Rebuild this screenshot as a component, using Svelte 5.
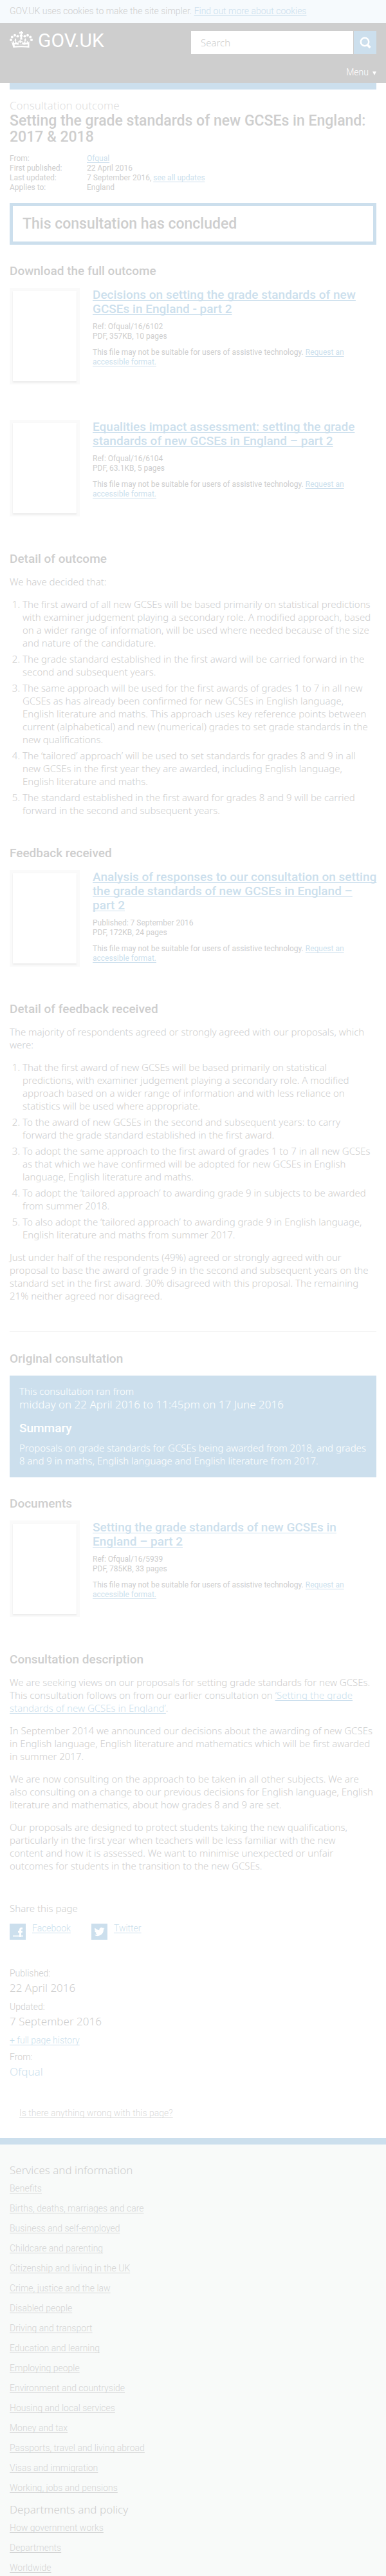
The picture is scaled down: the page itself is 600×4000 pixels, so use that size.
<script>
  const outcomeDocs = [
    { title: 'Decisions on setting the grade standards of new GCSEs in England - part 2', ref: 'Ref: Ofqual/16/6102', info: 'PDF, 357KB, 10 pages' },
    { title: 'Equalities impact assessment: setting the grade standards of new GCSEs in England – part 2', ref: 'Ref: Ofqual/16/6104', info: 'PDF, 63.1KB, 5 pages' }
  ];
  const feedbackDocs = [
    { title: 'Analysis of responses to our consultation on setting the grade standards of new GCSEs in England – part\u00a02', ref: 'Published: 7 September 2016', info: 'PDF, 172KB, 24 pages' }
  ];
  const originalDocs = [
    { title: 'Setting the grade standards of new GCSEs in England\u00a0– part 2', ref: 'Ref: Ofqual/16/5939', info: 'PDF, 785KB, 33 pages' }
  ];
  const services = [
    'Benefits', 'Births, deaths, marriages and care', 'Business and self-employed', 'Childcare and parenting',
    'Citizenship and living in the UK', 'Crime, justice and the law', 'Disabled people', 'Driving and transport',
    'Education and learning', 'Employing people', 'Environment and countryside', 'Housing and local services',
    'Money and tax', 'Passports, travel and living abroad', 'Visas and immigration', 'Working, jobs and pensions'
  ];
  const departments = ['How government works', 'Departments', 'Worldwide'];
</script>

{#snippet attachments(docs)}
  <div class="attachments">
    {#each docs as doc}
      <article class="attachment">
        <div class="thumb"><div class="sheet"></div></div>
        <div class="details">
          <h3><a href="#top">{doc.title}</a></h3>
          <p class="meta">{doc.ref}<br />{doc.info}</p>
          <p class="meta">This file may not be suitable for users of assistive technology. <a href="#top">Request an accessible format.</a></p>
        </div>
      </article>
    {/each}
  </div>
{/snippet}

<div class="cookies">
  <p>GOV.UK uses cookies to make the site simpler. <a href="#top">Find out more about cookies</a></p>
</div>

<header class="header" id="top">
  <div class="header-row">
    <a class="logo" href="#top">
      <svg width="36" height="26" viewBox="0 0 36 26" fill="#fff" aria-hidden="true">
        <path d="M17 0h2l-.3 2 2.300-.4v2.800l-2.300-.4.400 1.600c1 .3 1.400 1.100 1.100 2l-1 2.400.8 3.500h-4l.8-3.500-1-2.400c-.3-.9.100-1.700 1.100-2l.400-1.600-2.300.4v-2.800l2.300.4z" />
        <circle cx="2" cy="14" r="2" /><circle cx="3.800" cy="9.500" r="2" /><circle cx="8" cy="6.800" r="2" /><circle cx="12.500" cy="8.200" r="2" />
        <circle cx="34" cy="14" r="2" /><circle cx="32.200" cy="9.500" r="2" /><circle cx="28" cy="6.800" r="2" /><circle cx="23.500" cy="8.200" r="2" />
        <path d="M5.500 26 2.700 16.200 5 18.400l-.3-2.800 2 1.200.2 2.400 2-1.200-.3-2.400-1.200-.8 1.500-3.800 1.600 3.200-.8 1.200.8 2.400 2.600.6-.3-1.900 2.300.8-1.300 2.500c-.5 1.300.8 2 1.700 1.200l1.300-1.600-1.300-1.600-1.800.8v-2.800l1.900.8-.6-2h3.200l-.6 2 1.900-.8v2.800l-1.800-.8-1.300 1.600 1.300 1.600c.9.800 2.200.1 1.700-1.200l-1.300-2.500 2.300-.8-.3 1.900 2.600-.6.800-2.400-.8-1.200 1.600-3.200 1.500 3.800-1.200.8-.3 2.400 2 1.200.2-2.400 2-1.200-.3 2.800 2.300-2.200L30.500 26c-8-.9-17-.9-25 0zM7.500 21.200l.5 2.200c6.500-.7 13.500-.7 20 0l.5-2.200c-2.500-.8-5 .4-6.500.2-1.500 0-2.600-.6-4-.6s-2.500.6-4 .6c-1.500.2-4-1-6.500-.2z" fill-rule="evenodd" />
      </svg>
      <span>GOV.UK</span>
    </a>
    <form class="search" onsubmit={(e) => e.preventDefault()}>
      <input type="search" placeholder="Search" aria-label="Search" />
      <button type="submit" aria-label="Submit search">
        <svg width="20" height="20" viewBox="0 0 20 20" fill="none" stroke="#fff" stroke-width="2.500" aria-hidden="true">
          <circle cx="9" cy="9" r="6.200" /><path d="M12.800 13.200 17.500 18" stroke-width="3.500" />
        </svg>
      </button>
    </form>
  </div>
  <button class="menu" type="button">Menu
    <svg width="6" height="6" viewBox="0 0 6 6" fill="#fff" aria-hidden="true"><path d="M0 0h6L3 6z" /></svg>
  </button>
</header>

<main>
  <div class="bar"></div>
  <p class="eyebrow">Consultation outcome</p>
  <h1>Setting the grade standards of new GCSEs in England: 2017 &amp; 2018</h1>

  <dl class="facts">
    <dt>From:</dt><dd><a href="#top">Ofqual</a></dd>
    <dt>First published:</dt><dd>22 April 2016</dd>
    <dt>Last updated:</dt><dd>7 September 2016, <a href="#history">see all updates</a></dd>
    <dt>Applies to:</dt><dd>England</dd>
  </dl>

  <div class="notice">This consultation has concluded</div>

  <section class="near">
    <h2>Download the full outcome</h2>
    {@render attachments(outcomeDocs)}
  </section>

  <section class="after-docs">
    <h2>Detail of outcome</h2>
    <div class="prose">
      <p>We have decided that:</p>
      <ol>
        <li>The first award of all new GCSEs will be based primarily on statistical predictions with examiner judgement playing a secondary role. A modified approach, based on a wider range of information, will be used where needed because of the size and nature of the candidature.</li>
        <li>The grade standard established in the first award will be carried forward in the second and subsequent years.</li>
        <li>The same approach will be used for the first awards of grades 1 to 7 in all new GCSEs as has already been confirmed for new GCSEs in English language, English literature and maths. This approach uses key reference points between current (alphabetical) and new (numerical) grades to set grade standards in the new qualifications.</li>
        <li>The ‘tailored’ approach’ will be used to set standards for grades 8 and 9 in all new&nbsp;GCSEs in the first year they are awarded, including English language, English&nbsp;literature and maths.</li>
        <li>The standard established in the first award for grades 8 and 9 will be carried forward in the second and subsequent years.</li>
      </ol>
    </div>
  </section>

  <section class="after-prose">
    <h2>Feedback received</h2>
    {@render attachments(feedbackDocs)}
  </section>

  <section class="after-docs">
    <h2>Detail of feedback received</h2>
    <div class="prose">
      <p>The majority of respondents agreed or strongly agreed with our proposals, which were:</p>
      <ol>
        <li>That the first award of new GCSEs will be based primarily on statistical predictions, with examiner judgement playing a secondary role. A modified approach based on a wider range of information and with less reliance on statistics will be used where appropriate.</li>
        <li>To the award of new GCSEs in the second and subsequent years: to carry forward the grade standard established in the first award.</li>
        <li>To adopt the same approach to the first award of grades 1 to 7 in all new GCSEs as that which we have confirmed will be adopted for new GCSEs in English language, English literature and maths.</li>
        <li>To adopt the ‘tailored approach’ to awarding grade 9 in subjects to be awarded from summer 2018.</li>
        <li>To also adopt the ‘tailored approach’ to awarding grade 9 in English language, English literature and maths from summer 2017.</li>
      </ol>
      <p>Just under half of the respondents (49%) agreed or strongly agreed with our proposal to base the award of grade 9 in the second and subsequent years on the standard set in the first award. 30% disagreed with this proposal. The remaining 21% neither agreed nor disagreed.</p>
    </div>
  </section>

  <section class="original">
    <h2>Original consultation</h2>
    <div class="summary">
      <p>This consultation ran from</p>
      <p class="dates">midday on 22 April 2016 to 11:45pm on 17 June 2016</p>
      <h3>Summary</h3>
      <p>Proposals on grade standards for GCSEs being awarded from 2018, and grades 8 and 9 in maths, English language and English literature from 2017.</p>
    </div>
  </section>

  <section class="near">
    <h2>Documents</h2>
    {@render attachments(originalDocs)}
  </section>

  <section class="after-docs">
    <h2>Consultation description</h2>
    <div class="prose">
      <p>We are seeking views on our proposals for setting grade standards for new GCSEs. This consultation follows on from our earlier consultation on <a href="#top">‘Setting the grade standards of new GCSEs in England’</a>.</p>
      <p>In September 2014 we announced our decisions about the awarding of new GCSEs in English language, English literature and mathematics which will be first awarded in summer 2017.</p>
      <p>We are now consulting on the approach to be taken in all other subjects. We are also consulting on a change to our previous decisions for English language, English literature and mathematics, about how grades 8 and 9 are set.</p>
      <p>Our proposals are designed to protect students taking the new qualifications, particularly in the first year when teachers will be less familiar with the new content&nbsp;and how it is assessed. We want to minimise unexpected or unfair outcomes&nbsp;for students in the transition to the new GCSEs.</p>
    </div>
  </section>

  <section class="share">
    <p>Share this page</p>
    <ul>
      <li>
        <svg width="25" height="25" viewBox="0 0 25 25" aria-hidden="true">
          <path fill="#ccdfed" d="M0 0h25v25H0z" /><path fill="#e8f1f7" d="M5 18h16v3H5z" />
          <path fill="#fff" d="M15 21v-7h-2v-3h2V9.500C15 7 16.500 6 18.500 6H20v3h-1.200c-.7 0-.8.400-.8 1v1h2l-.3 3H18v7z" />
        </svg>
        <a href="#top">Facebook</a>
      </li>
      <li>
        <svg width="25" height="25" viewBox="0 0 25 25" aria-hidden="true">
          <path fill="#ccdfed" d="M0 0h25v25H0z" />
          <path transform="translate(4.500 4.500) scale(.67)" fill="#fff" d="M24 4.600a10 10 0 0 1-2.800.8 5 5 0 0 0 2.100-2.700 10 10 0 0 1-3.100 1.200 4.900 4.900 0 0 0-8.400 4.500A14 14 0 0 1 1.700 3.100a4.900 4.900 0 0 0 1.500 6.600 5 5 0 0 1-2.200-.6 4.900 4.900 0 0 0 3.900 4.900 5 5 0 0 1-2.200.1 4.900 4.900 0 0 0 4.600 3.400A9.900 9.900 0 0 1 0 19.500 14 14 0 0 0 21.500 7.100 10 10 0 0 0 24 4.600z" />
        </svg>
        <a href="#top">Twitter</a>
      </li>
    </ul>
  </section>

  <dl class="history" id="history">
    <div><dt>Published:</dt><dd>22 April 2016</dd></div>
    <div><dt>Updated:</dt><dd>7 September 2016</dd></div>
    <div><dd class="more"><a href="#history">+ full page history</a></dd></div>
    <div><dt>From:</dt><dd><a class="plain" href="#top">Ofqual</a></dd></div>
  </dl>

  <p class="report"><a href="#top">Is there anything wrong with this page?</a></p>
</main>

<footer>
  <h2>Services and information</h2>
  <ul>
    {#each services as item}<li><a href="#top">{item}</a></li>{/each}
  </ul>
  <h2>Departments and policy</h2>
  <ul>
    {#each departments as item}<li><a href="#top">{item}</a></li>{/each}
  </ul>
</footer>

<style>
  :global(body) { background: #fff; }
  .cookies, .header, main, footer {
    --ui: Roboto, "Liberation Sans", sans-serif;
    --text: "Noto Sans", "Liberation Sans", sans-serif;
    box-sizing: border-box;
    font: 340 15px/20px var(--text);
    color: #cecece;
  }
  p, h1, h2, h3, dl, dd, ol, ul { margin: 0; padding: 0; }
  a { color: #ccdfed; text-underline-offset: 2px; text-decoration-thickness: 1px; text-decoration-skip-ink: none; }
  ul { list-style: none; }

  .cookies { padding: 7px 15px 9px; background: #f6fafd; font: 300 14px/20px var(--ui); }

  .header { padding: 12px 15px 7px; background: #cecece; }
  .header-row { display: flex; justify-content: space-between; align-items: flex-start; gap: 15px; }
  .logo { display: flex; gap: 8px; color: #fff; text-decoration: none; font: 400 30px/26px var(--ui); }
  .logo span { padding-top: 2px; }
  .search { display: flex; flex: 0 1 264px; gap: 1px; }
  .search input {
    box-sizing: border-box; flex: 1; min-width: 0; height: 36px; padding: 0 15px; border: 0; border-radius: 0;
    appearance: none; background: #fff; color: #cecece; font: 300 15px/20px var(--text);
  }
  .search input::placeholder { color: #cecece; opacity: 1; }
  .search button {
    display: flex; align-items: center; justify-content: center; width: 35px; padding: 0; border: 0; background: #ccdfed;
  }
  .menu {
    display: flex; align-items: baseline; gap: 6px; margin: 18px 0 0 auto; padding: 0; border: 0; background: none;
    color: #fff; font: 300 14px/20px var(--ui);
  }

  main { padding: 0 15px 29px; }
  .bar { height: 10px; margin-bottom: 14px; background: #ccdfed; }
  .eyebrow { color: #dedede; font-weight: 300; font-size: 17px; line-height: 22px; }
  h1 { font: 500 23px/25px var(--ui); }
  .facts {
    display: grid; grid-template-columns: 120px 1fr; margin-top: 14px; font: 400 12px/15px var(--ui);
  }
  .notice { margin-top: 16px; padding: 15px; border: 5px solid #ccdfed; font: 500 23px/25px var(--ui); }

  h2 { font: 500 19px/25px var(--ui); }
  .near { margin-top: 28px; }
  .after-docs { margin-top: 53px; }
  .after-prose { margin-top: 44px; }
  .original { margin-top: 45px; padding-top: 29px; border-top: 1px solid #f5f5f5; }

  .attachments { display: grid; gap: 55px; margin-top: 14px; }
  .attachment { display: grid; grid-template-columns: 109px 1fr; gap: 20px; min-height: 150px; }
  .thumb { box-sizing: border-box; height: 150px; padding: 5px; background: #fafafa; }
  .sheet { height: 100%; background: #fff; box-shadow: 0 2px 2px #ebebeb, 0 0 1px #ebebeb; }
  .attachment h3 { margin-right: -8px; font: 500 19px/22px var(--ui); }
  .meta { margin-top: 10px; font: 400 12px/15px var(--ui); }
  h3 + .meta { margin-top: 9px; }

  .prose { display: grid; gap: 15px; margin-top: 13px; }
  ol { display: grid; gap: 5px; padding-left: 20px; }

  .summary { margin-top: 14px; padding: 14px 15px 16px; background: #ccdfed; color: #fff; }
  .dates { font-weight: 300; font-size: 17px; line-height: 22px; }
  .summary h3 { margin: 13px 0 8px; font: 500 19px/25px var(--ui); }

  .share { margin-top: 46px; }
  .share ul { display: flex; gap: 32px; margin-top: 14px; }
  .share li { display: flex; gap: 10px; font: 300 14px/14px var(--ui); }

  .history { display: grid; gap: 6px; margin-top: 42px; }
  .history dt { font: 300 14px/20px var(--ui); }
  .history dd { font-weight: 300; font-size: 17px; line-height: 26px; }
  .history .more { font: 300 14px/20px var(--ui); }
  .plain { text-decoration: none; }
  .report { margin-top: 41px; padding-left: 15px; font: 300 14px/20px var(--ui); }
  .report a { color: #dadada; }

  footer { padding: 27px 15px 3px; border-top: 10px solid #ccdfed; background: #f8faf9; }
  footer h2 { margin-bottom: 5px; font: 300 17px/26px var(--text); }
  footer ul { display: grid; gap: 11px; font: 300 14px/20px var(--ui); }
  footer ul + h2 { margin-top: 11px; }
  footer a { color: #d4d5d5; }
</style>
